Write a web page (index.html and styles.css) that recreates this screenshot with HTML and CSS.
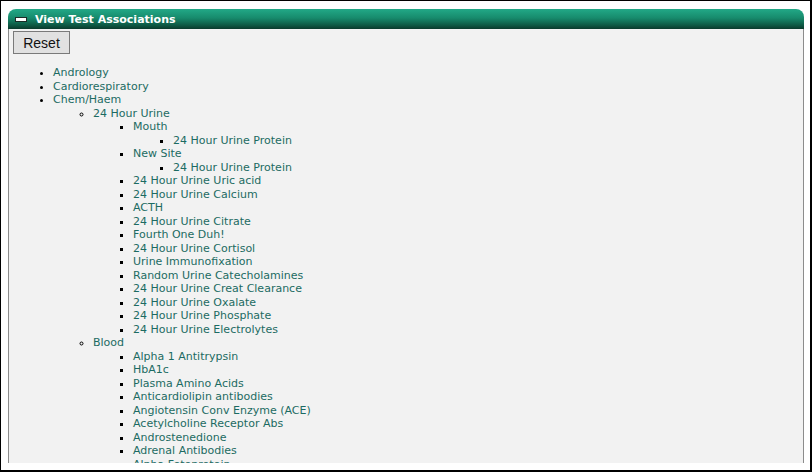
FILE: index.html
```html
<!DOCTYPE html>
<html lang="en">
<head>
  <meta charset="UTF-8">
  <title>View Test Associations</title>
  <link rel="stylesheet" href="styles.css">
</head>
<body>
  <div class="frame">
    <section class="panel">
      <h2 class="panel-header"><span class="collapse-icon"></span>View Test Associations</h2>
      <div class="panel-body">
        <button type="button" class="reset-btn">Reset</button>
        <ul class="tree">
          <li><a href="#">Andrology</a></li>
          <li><a href="#">Cardiorespiratory</a></li>
          <li><a href="#">Chem/Haem</a>
            <ul>
              <li><a href="#">24 Hour Urine</a>
                <ul>
                  <li><a href="#">Mouth</a>
                    <ul><li><a href="#">24 Hour Urine Protein</a></li></ul>
                  </li>
                  <li><a href="#">New Site</a>
                    <ul><li><a href="#">24 Hour Urine Protein</a></li></ul>
                  </li>
                  <li><a href="#">24 Hour Urine Uric acid</a></li>
                  <li><a href="#">24 Hour Urine Calcium</a></li>
                  <li><a href="#">ACTH</a></li>
                  <li><a href="#">24 Hour Urine Citrate</a></li>
                  <li><a href="#">Fourth One Duh!</a></li>
                  <li><a href="#">24 Hour Urine Cortisol</a></li>
                  <li><a href="#">Urine Immunofixation</a></li>
                  <li><a href="#">Random Urine Catecholamines</a></li>
                  <li><a href="#">24 Hour Urine Creat Clearance</a></li>
                  <li><a href="#">24 Hour Urine Oxalate</a></li>
                  <li><a href="#">24 Hour Urine Phosphate</a></li>
                  <li><a href="#">24 Hour Urine Electrolytes</a></li>
                </ul>
              </li>
              <li><a href="#">Blood</a>
                <ul>
                  <li><a href="#">Alpha 1 Antitrypsin</a></li>
                  <li><a href="#">HbA1c</a></li>
                  <li><a href="#">Plasma Amino Acids</a></li>
                  <li><a href="#">Anticardiolipin antibodies</a></li>
                  <li><a href="#">Angiotensin Conv Enzyme (ACE)</a></li>
                  <li><a href="#">Acetylcholine Receptor Abs</a></li>
                  <li><a href="#">Androstenedione</a></li>
                  <li><a href="#">Adrenal Antibodies</a></li>
                  <li><a href="#">Alpha Fetoprotein</a></li>
                </ul>
              </li>
            </ul>
          </li>
        </ul>
      </div>
    </section>
  </div>
</body>
</html>
```

FILE: styles.css
```css
* {
  margin: 0;
  padding: 0;
  box-sizing: border-box;
}

body {
  background: #fff;
  font-family: "DejaVu Sans", Verdana, sans-serif;
}

.frame {
  width: 812px;
  height: 472px;
  border-style: solid;
  border-color: #000;
  border-width: 1px 2px 2px 1px;
  padding: 8px 6px 7px 7px;
  overflow: hidden;
}

.panel {
  width: 796px;
  height: 454px;
  display: flex;
  flex-direction: column;
}

.panel-header {
  height: 20px;
  display: flex;
  align-items: center;
  gap: 8px;
  padding-left: 7px;
  border-radius: 8px 8px 0 0;
  background: linear-gradient(to bottom, #22a987 0%, #178a6c 45%, #0e5a45 80%, #0a3a2c 100%);
  color: #fff;
  font-size: 11px;
  font-weight: bold;
}

.collapse-icon {
  width: 12px;
  height: 5px;
  background: #fff;
  border: 1px solid #1b2b26;
}

.panel-body {
  flex: 1;
  overflow: hidden;
  background: #f2f2f2;
  border-left: 1px solid #8c8c8c;
  border-right: 1px solid #8c8c8c;
  padding: 2px 4px 0;
  font-size: 11px;
  line-height: 13.5px;
}

.reset-btn {
  width: 57px;
  height: 23px;
  font-family: "Liberation Sans", Arial, sans-serif;
  font-size: 14px;
  color: #111;
  background: #e1e1e1;
  border: 1px solid #7a7a7a;
}

.tree {
  margin: 12px 0;
  padding-left: 40px;
}

.tree ul {
  padding-left: 40px;
}

.tree li::marker {
  color: #000;
}

.tree a {
  color: #1c6b62;
  text-decoration: none;
}
```
